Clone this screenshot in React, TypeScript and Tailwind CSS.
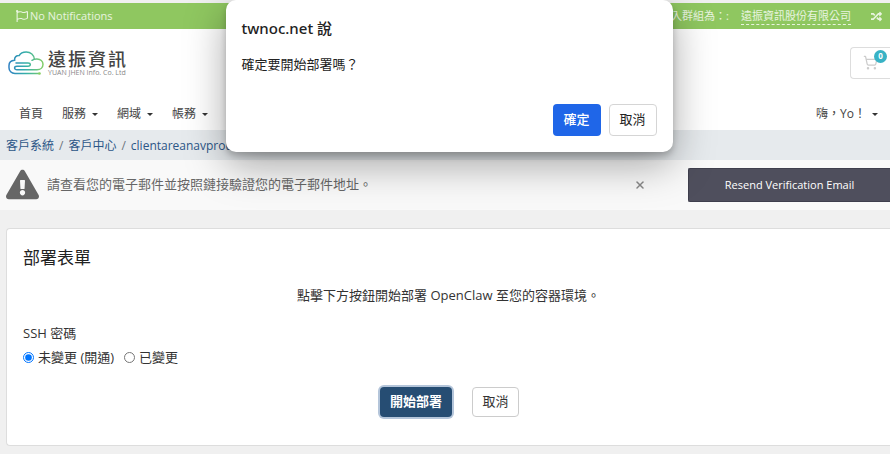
import { useState } from 'react';
import type { ReactNode } from 'react';
import { FaExclamationTriangle, FaRandom, FaRegFlag } from 'react-icons/fa';
import { ShoppingCart, X } from 'lucide-react';

const NAV_ITEMS = [
  { label: '首頁', hasMenu: false },
  { label: '服務', hasMenu: true },
  { label: '網域', hasMenu: true },
  { label: '帳務', hasMenu: true },
];

const BREADCRUMBS = ['客戶系統', '客戶中心', 'clientareanavproducts'];

const PASSWORD_OPTIONS = [
  { value: 'unchanged', label: '未變更 (開通)' },
  { value: 'changed', label: '已變更' },
];

function Caret() {
  return (
    <span className="border-x-[3px] border-t-[3px] border-x-transparent border-t-[#333]" />
  );
}

function Logo() {
  return (
    <a href="#" className="flex items-center gap-1">
      <svg width="36" height="24" viewBox="0 0 36 24" fill="none" strokeWidth="1.5" strokeLinecap="round">
        <defs>
          <linearGradient id="cloud" x1="0" y1="12" x2="36" y2="12" gradientUnits="userSpaceOnUse">
            <stop offset="0" stopColor="#2f7fc4" />
            <stop offset="0.5" stopColor="#35b0a8" />
            <stop offset="1" stopColor="#86cf63" />
          </linearGradient>
        </defs>
        <g stroke="url(#cloud)">
          <path d="M31 22.500H7C3.400 22.500 1 20 1 16.700V14.500C1 11.600 3.200 9.400 6.600 9.200C6.300 6.200 8.400 4.200 11.300 4.400C12.500 2 15 1 18.200 1C22.800 1 26 4 26.300 8" />
          <path d="M24 9.300C25.500 8.200 27 7.800 29 7.900C32.500 8.100 35 10.300 35 13.200C35 16.400 32.500 18.800 29 18.800H9C7.500 18.800 6.600 18 6.600 17C6.600 15.900 7.500 15.300 9 15.300H20C21.500 15.300 22.300 14.700 22.300 13.600C22.300 12.500 21.500 11.900 20 11.900H8" />
        </g>
        <circle cx="31.500" cy="22.500" r="1.300" fill="#86cf63" />
      </svg>
      <span className="flex flex-col">
        <span className="flex gap-0.5 text-lg leading-5 font-medium text-[#444]">
          {['遠', '振', '資', '訊'].map((char) => (
            <span key={char}>{char}</span>
          ))}
        </span>
        <span className="text-[7px] leading-[7px] whitespace-nowrap text-[#888]">YUAN JHEN Info. Co. Ltd</span>
      </span>
    </a>
  );
}

function TopBar() {
  return (
    <div className="flex h-[26px] items-center justify-between bg-[#8fc760] pr-2 pl-4 text-[11px] text-white/80">
      <button type="button" className="flex items-center gap-0.5">
        <FaRegFlag size={12} />
        No Notifications
      </button>
      <div className="flex items-center gap-3">
        <span>登入群組為：:</span>
        <a href="#" className="mr-2 border-b border-dashed border-white/80 leading-4">遠振資訊股份有限公司</a>
        <button type="button" aria-label="切換">
          <FaRandom size={11} />
        </button>
      </div>
    </div>
  );
}

function Header() {
  return (
    <header className="bg-white">
      <div className="flex h-[67px] items-center justify-between pl-2">
        <Logo />
        <button
          type="button"
          aria-label="購物車"
          className="relative flex h-8 w-10 items-center rounded-l-sm border border-r-0 border-[#ddd] pl-3 text-[#ccc]"
        >
          <ShoppingCart size={15} strokeWidth={2} />
          <span className="absolute top-0.5 left-[23px] flex size-[13px] items-center justify-center rounded-full bg-[#38b2c5] text-[8px] font-bold text-white">
            0
          </span>
        </button>
      </div>
      <nav className="flex h-[34px] items-center justify-between pt-0.5 pr-3 pl-[19px] text-xs text-[#444]">
        <ul className="flex gap-[19px]">
          {NAV_ITEMS.map((item) => (
            <li key={item.label}>
              <a href="#" className="flex items-center gap-1.5">
                {item.label}
                {item.hasMenu && <Caret />}
              </a>
            </li>
          ))}
        </ul>
        <a href="#" className="flex items-center gap-1.5">
          嗨，Yo！
          <Caret />
        </a>
      </nav>
    </header>
  );
}

function Breadcrumb() {
  return (
    <ol className="flex h-[30px] items-center gap-[5px] bg-[#e6eaed] pt-0.5 pl-1.5 text-xs text-[#2c5687]">
      {BREADCRUMBS.map((crumb, i) => (
        <li key={crumb} className="flex gap-[5px]">
          {i > 0 && <span className="text-[#6c757d]">/</span>}
          <a href="#">{crumb}</a>
        </li>
      ))}
    </ol>
  );
}

function VerifyBanner() {
  return (
    <div className="flex h-[50px] items-center bg-[#f9f9f9] pl-1.5 text-[#666]">
      <FaExclamationTriangle size={33} className="shrink-0 pb-0.5" />
      <p className="flex-1 pl-2 text-[13px]">請查看您的電子郵件並按照鏈接驗證您的電子郵件地址。</p>
      <button type="button" aria-label="關閉" className="mr-[42px] text-[#888]">
        <X size={12} strokeWidth={3} />
      </button>
      <button
        type="button"
        className="h-[34px] w-[202px] rounded-l-xs border border-r-0 border-[#3f3f4d] bg-[#4f4f5d] text-[11px] font-medium text-white"
      >
        Resend Verification Email
      </button>
    </div>
  );
}

function DeployForm() {
  const [password, setPassword] = useState('unchanged');

  return (
    <form className="rounded-l-sm border border-r-0 border-[#ddd] bg-white px-4 pt-[15px] pb-7 text-[13px] text-[#333]">
      <h1 className="text-[17px] leading-7 text-[#222]">部署表單</h1>
      <p className="mt-[13px] text-center leading-5">點擊下方按鈕開始部署 OpenClaw 至您的容器環境。</p>
      <fieldset className="mt-[18px]">
        <legend className="leading-5">SSH 密碼</legend>
        <div className="mt-1 flex gap-2.5">
          {PASSWORD_OPTIONS.map((option) => (
            <label key={option.value} className="flex items-center gap-1 leading-5">
              <input
                type="radio"
                name="ssh-password"
                className="size-[11px]"
                value={option.value}
                checked={password === option.value}
                onChange={() => setPassword(option.value)}
              />
              {option.label}
            </label>
          ))}
        </div>
      </fieldset>
      <div className="mt-5 flex items-center justify-center gap-5 pl-0.5">
        <button
          type="button"
          className="h-[30px] w-[72px] rounded-sm bg-[#264d73] font-semibold text-white ring-2 ring-[#b4c5da]"
        >
          開始部署
        </button>
        <button type="button" className="h-[30px] w-[47px] rounded-sm border border-[#ccc] bg-white">
          取消
        </button>
      </div>
    </form>
  );
}

interface DialogButtonProps {
  children: ReactNode;
  primary?: boolean;
}

function DialogButton({ children, primary }: DialogButtonProps) {
  return (
    <button
      type="button"
      className={`h-8 w-12 rounded text-[13px] ${
        primary ? 'bg-[#1f66e8] font-medium text-white' : 'border border-[#d5d5d5] bg-white text-[#222]'
      }`}
    >
      {children}
    </button>
  );
}

function ConfirmDialog() {
  return (
    <div className="absolute inset-x-0 top-0 flex justify-center pl-2">
      <div
        role="dialog"
        aria-labelledby="confirm-title"
        className="w-[447px] rounded-[10px] bg-white px-4 pt-[18px] pb-4 text-[#222] shadow-[0_4px_6px_rgba(0,0,0,0.2),0_12px_40px_rgba(0,0,0,0.35)]"
      >
        <h2
          id="confirm-title"
          className="font-['Noto_Sans','Noto_Sans_CJK_TC',sans-serif] text-[15px] leading-5 font-medium"
        >
          twnoc.net 說
        </h2>
        <p className="mt-4 text-[13px] leading-5">確定要開始部署嗎？</p>
        <div className="mt-[30px] flex justify-end gap-2">
          <DialogButton primary>確定</DialogButton>
          <DialogButton>取消</DialogButton>
        </div>
      </div>
    </div>
  );
}

export default function App() {
  return (
    <div className="relative min-h-screen overflow-hidden bg-[#f0f0f0] pt-[3px] font-['Open_Sans','Noto_Sans_CJK_TC',sans-serif]">
      <TopBar />
      <Header />
      <Breadcrumb />
      <VerifyBanner />
      <main className="pt-[18px] pb-2 pl-1.5">
        <DeployForm />
      </main>
      <ConfirmDialog />
    </div>
  );
}
